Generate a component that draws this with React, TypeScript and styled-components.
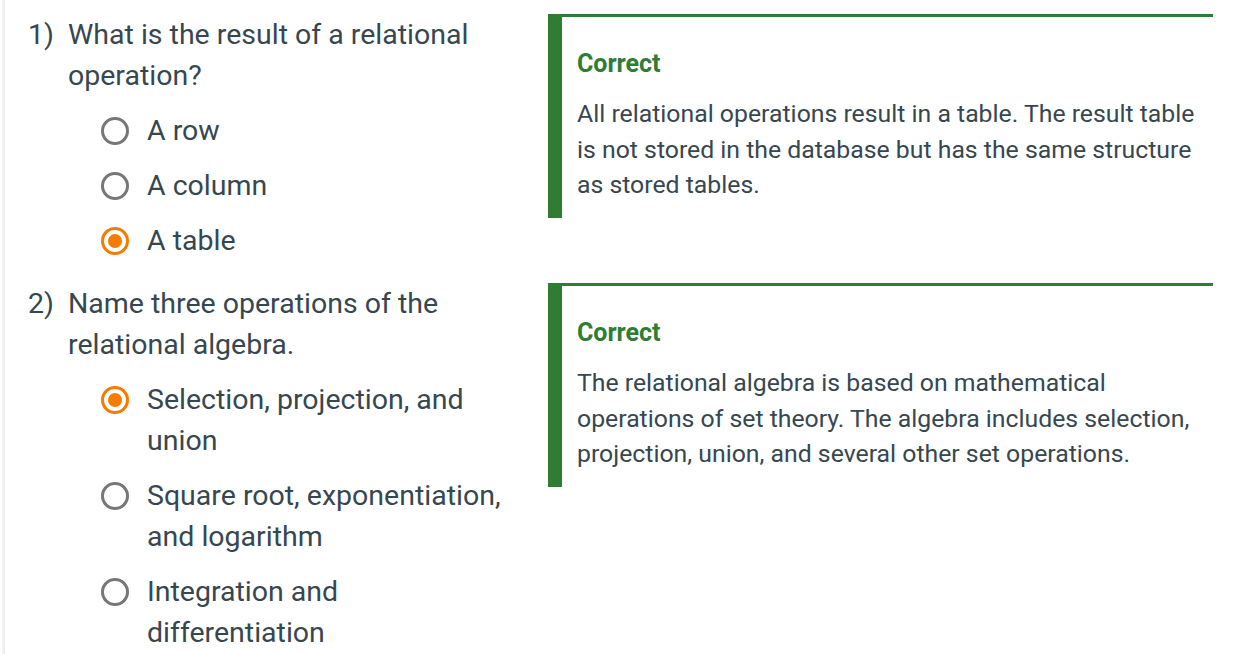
import React from "react";
import styled, { createGlobalStyle } from "styled-components";

const GlobalStyle = createGlobalStyle`
  html, body {
    margin: 0;
    padding: 0;
    background: #ffffff;
  }
  body {
    font-family: Roboto, "Noto Sans", "Liberation Sans", sans-serif;
    color: #37474f;
  }
`;

const Page = styled.div`
  box-sizing: border-box;
  min-height: 100vh;
  margin-left: 2px;
  border-left: 3px solid #f0f0f0;
  padding: 14px 0 0 23px;
  display: flex;
  flex-direction: column;
  gap: 15px;
`;

const QuestionRow = styled.div`
  display: grid;
  grid-template-columns: 520px 665px;
  align-items: start;
`;

const QuestionCol = styled.div`
  display: flex;
  flex-direction: column;
  padding-right: 38px;
`;

const Prompt = styled.div`
  display: grid;
  grid-template-columns: 40px 1fr;
  font-size: 28.5px;
  line-height: 41px;
`;

const Num = styled.span``;

const Options = styled.div`
  display: flex;
  flex-direction: column;
  margin-top: 7px;
  padding-left: 73px;
`;

const Option = styled.label`
  display: flex;
  align-items: flex-start;
  gap: 18px;
  padding: 7px 0;
  font-size: 28.5px;
  line-height: 41px;
  cursor: pointer;
`;

const Radio = styled.span<{ $checked?: boolean }>`
  flex: none;
  box-sizing: border-box;
  width: 28px;
  height: 28px;
  margin-top: 6.5px;
  border-radius: 50%;
  border: 3px solid ${(p) => (p.$checked ? "#f57c00" : "#777777")};
  display: flex;
  align-items: center;
  justify-content: center;
  &::after {
    content: "";
    display: ${(p) => (p.$checked ? "block" : "none")};
    width: 14px;
    height: 14px;
    border-radius: 50%;
    background: #f57c00;
  }
`;

const Feedback = styled.div`
  box-sizing: border-box;
  border-top: 3px solid #2e7d32;
  border-left: 14px solid #2e7d32;
  padding: 31.5px 8px 15.5px 15px;
  display: flex;
  flex-direction: column;
  gap: 17.5px;
`;

const FeedbackTitle = styled.div`
  font-size: 25px;
  line-height: 30px;
  font-weight: 700;
  color: #2e7d32;
`;

const FeedbackText = styled.div`
  font-size: 24.8px;
  line-height: 35.5px;
  color: #37474f;
`;

type Q = {
  num: string;
  prompt: string;
  options: string[];
  selected: number;
  explanation: string;
};

const questions: Q[] = [
  {
    num: "1)",
    prompt: "What is the result of a relational operation?",
    options: ["A row", "A column", "A table"],
    selected: 2,
    explanation:
      "All relational operations result in a table. The result table is not stored in the database but has the same structure as stored tables.",
  },
  {
    num: "2)",
    prompt: "Name three operations of the relational algebra.",
    options: [
      "Selection, projection, and union",
      "Square root, exponentiation, and logarithm",
      "Integration and differentiation",
    ],
    selected: 0,
    explanation:
      "The relational algebra is based on mathematical operations of set theory. The algebra includes selection, projection, union, and several other set operations.",
  },
];

export default function App() {
  return (
    <>
      <GlobalStyle />
      <Page>
        {questions.map((q) => (
          <QuestionRow key={q.num}>
            <QuestionCol>
              <Prompt>
                <Num>{q.num}</Num>
                <span>{q.prompt}</span>
              </Prompt>
              <Options>
                {q.options.map((o, i) => (
                  <Option key={o}>
                    <Radio $checked={i === q.selected} />
                    <span>{o}</span>
                  </Option>
                ))}
              </Options>
            </QuestionCol>
            <Feedback>
              <FeedbackTitle>Correct</FeedbackTitle>
              <FeedbackText>{q.explanation}</FeedbackText>
            </Feedback>
          </QuestionRow>
        ))}
      </Page>
    </>
  );
}
